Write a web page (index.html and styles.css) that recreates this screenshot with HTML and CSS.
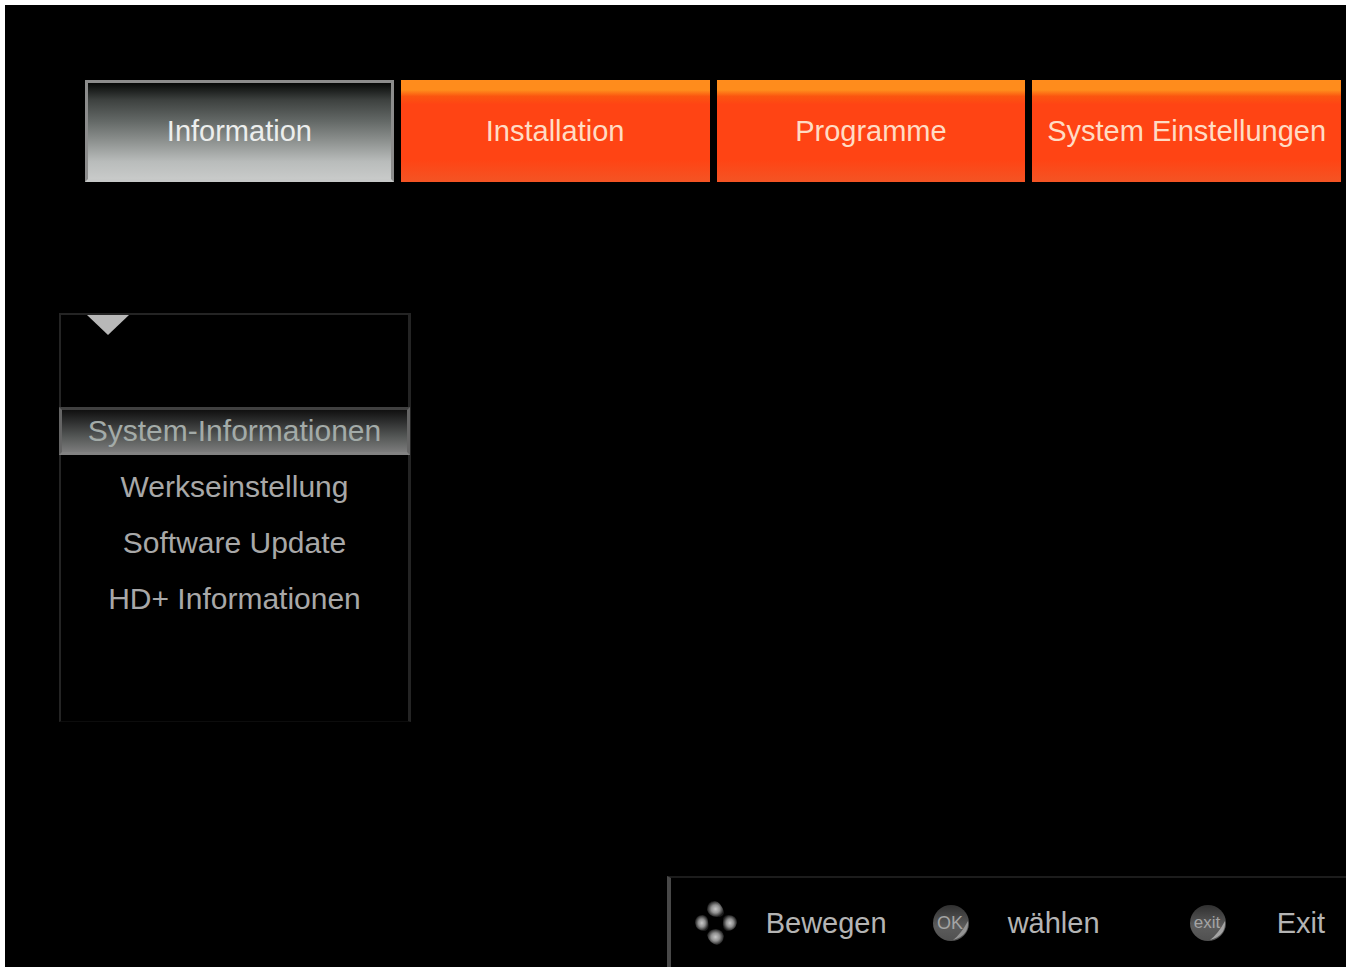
FILE: index.html
```html
<!DOCTYPE html>
<html lang="de">
<head>
<meta charset="utf-8">
<meta name="viewport" content="width=device-width, initial-scale=1">
<title>Information</title>
<link rel="stylesheet" href="styles.css">
</head>
<body>
<div class="screen">
  <nav class="tabs" aria-label="Hauptmenü">
    <button class="tab tab-active" type="button" aria-current="page">Information</button>
    <button class="tab" type="button">Installation</button>
    <button class="tab" type="button">Programme</button>
    <button class="tab" type="button">System Einstellungen</button>
  </nav>
  <main class="content">
    <div class="menu">
      <svg class="menu-arrow" viewBox="0 0 42 20" aria-hidden="true"><path d="M0 0H42L21 20Z" fill="#b8b8b8"/></svg>
      <button class="item item-selected" type="button">System-Informationen</button>
      <button class="item" type="button">Werkseinstellung</button>
      <button class="item" type="button">Software Update</button>
      <button class="item" type="button">HD+ Informationen</button>
    </div>
  </main>
  <footer class="hints">
    <svg class="icon-move" viewBox="0 0 42 44" aria-hidden="true">
      <defs>
        <radialGradient id="dot"><stop offset="0" stop-color="#c8c8c8"/><stop offset=".5" stop-color="#909090"/><stop offset="1" stop-color="#1c1c1c"/></radialGradient>
        <linearGradient id="disc" x1="0" y1="0" x2="0" y2="1"><stop offset="0" stop-color="#303030"/><stop offset=".6" stop-color="#5c5c5c"/><stop offset="1" stop-color="#505050"/></linearGradient>
      </defs>
      <g fill="url(#dot)">
        <path d="M12 9Q12 0 20 0Q26 1 29 11Q29 16 22 16Q14 16 12 9Z"/>
        <path d="M0 22Q0 14 8 14Q13 15 13 20Q15 28 10 30Q1 30 0 22Z"/>
        <path d="M42 22Q42 14 33 14Q27 15 28 21Q27 28 32 30Q40 30 42 22Z"/>
        <path d="M12 34Q14 28 21 28Q28 29 29 35Q28 43 22 44Q14 42 12 34Z"/>
      </g>
    </svg>
    <span>Bewegen</span>
    <svg class="icon-key" viewBox="0 0 36 38" aria-hidden="true">
      <circle cx="18" cy="19" r="18" fill="url(#disc)"/>
      <path d="M35 17Q36 32 20 36Q28 30 35 17Z" fill="#949494"/>
      <text class="key-text" x="17" y="25" text-anchor="middle" font-size="18">OK</text>
    </svg>
    <span>wählen</span>
    <svg class="icon-key" viewBox="0 0 36 38" aria-hidden="true">
      <circle cx="18" cy="19" r="18" fill="url(#disc)"/>
      <path d="M35 17Q36 32 20 36Q28 30 35 17Z" fill="#a4a4a4"/>
      <text class="key-text" x="17" y="24" text-anchor="middle" font-size="17">exit</text>
    </svg>
    <span>Exit</span>
  </footer>
</div>
</body>
</html>
```
FILE: styles.css
```css
* {
  box-sizing: border-box;
}

body {
  margin: 0;
  padding: 5px 2px 3px 5px;
  background: #fff;
  font: 29px/36px "Liberation Sans", Arial, sans-serif;
}

button {
  font: inherit;
  border: 0;
  border-radius: 0;
  cursor: pointer;
  white-space: nowrap;
}

.screen {
  display: flex;
  flex-direction: column;
  min-height: calc(100vh - 8px);
  background: #000;
}

.tabs {
  display: grid;
  grid-template-columns: repeat(4, 1fr);
  gap: 7px;
  padding: 75px 5px 0 80px;
}

.tab {
  height: 102px;
  padding: 0;
  color: #ffdcc4;
  background: linear-gradient(#ff8c1c 0 10%, #fb5510 16%, #ff4414 24% 78%, #f45424);
}

.tab-active {
  border: 3px solid #8c8c8c;
  border-bottom-color: #c6c8c7;
  color: #eceeed;
  background: linear-gradient(#060807, #3e4240 18%, #646967 40%, #8c908e 60%, #b9bcbb 82%, #c8cac9);
}

.content {
  flex: 1;
  padding: 131px 54px;
}

.menu {
  display: flex;
  flex-direction: column;
  gap: 8px;
  width: 352px;
  padding-bottom: 98px;
  border: solid #242424;
  border-width: 2px 3px 1px 2px;
  border-bottom-color: #0c0c0c;
  font-size: 30px;
}

.menu-arrow {
  width: 42px;
  height: 20px;
  margin: 0 0 64px 26px;
}

.item {
  height: 48px;
  padding: 0;
  color: #a8a8a8;
  background: none;
}

.item-selected {
  margin: 0 -2px;
  border: 3px solid #646464;
  border-top-color: #404040;
  border-bottom-color: #828282;
  color: #a3aba8;
  background: linear-gradient(#101010, #303131 30%, #565958 65%, #7c7c7c);
}

.hints {
  display: grid;
  grid-template-columns: 71px 167px 75px 182px 87px auto;
  align-items: center;
  align-self: flex-end;
  height: 91px;
  padding: 0 21px 0 24px;
  border-top: 2px solid #1c1c1c;
  border-left: 4px solid #484848;
  color: #b4b4b4;
}

.icon-move {
  width: 42px;
  height: 44px;
}

.icon-key {
  width: 36px;
  height: 38px;
}

.key-text {
  font-family: "Liberation Sans", Arial, sans-serif;
  fill: #a4a4a4;
}
```
